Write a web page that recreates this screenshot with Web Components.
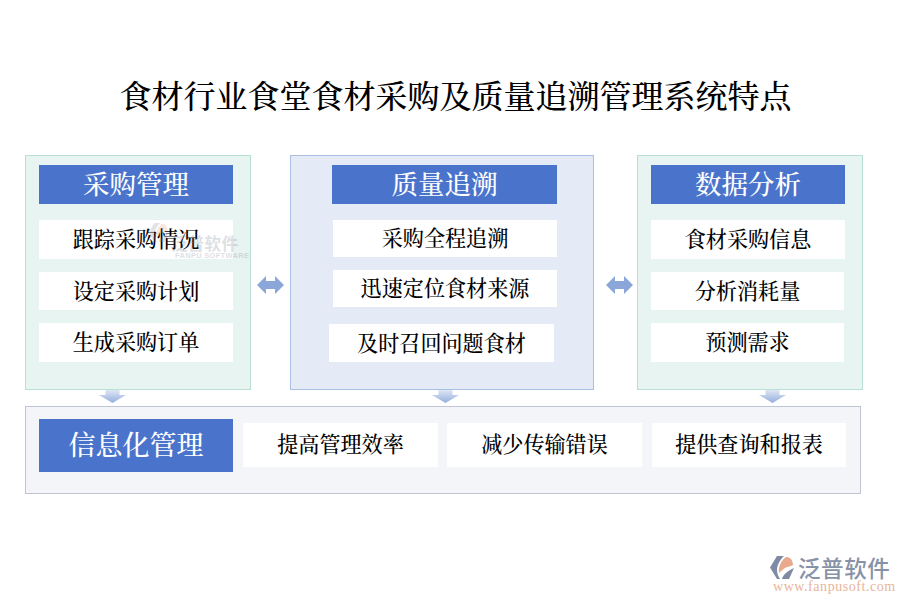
<!DOCTYPE html>
<html lang="zh"><head><meta charset="utf-8"><title>系统特点</title>
<style>
html,body{margin:0;padding:0;background:#fff}
body{width:900px;height:600px;overflow:hidden;font-family:"Noto Serif CJK SC","Liberation Serif","Noto Sans CJK SC",serif;color:#000}
</style></head><body>
<x-page>
  <x-title>食材行业食堂食材采购及质量追溯管理系统特点</x-title>
  <x-top>
    <x-panel heading="采购管理" tone="green" style="--w:226px;--pl:13px;--hw:194px;--arrow:73px">
      <x-row style="--w:194px;--h:39px;--mt:16px">跟踪采购情况</x-row>
      <x-row style="--w:194px;--h:38px;--mt:13px;--d:1px">设定采购计划</x-row>
      <x-row style="--w:194px;--h:39px;--mt:13px">生成采购订单</x-row>
    </x-panel>
    <x-link style="--w:39px;--shift:-1px"></x-link>
    <x-panel heading="质量追溯" tone="blue" style="--w:304px;--pl:41px;--hw:225px;--arrow:141px">
      <x-row style="--w:224px;--h:37px;--mt:16px;--ml:1px">采购全程追溯</x-row>
      <x-row style="--w:224px;--h:37px;--mt:13px;--ml:1px">迅速定位食材来源</x-row>
      <x-row style="--w:225px;--h:38px;--mt:17px;--ml:-3px;--d:1px">及时召回问题食材</x-row>
    </x-panel>
    <x-link style="--w:43px;--shift:8px"></x-link>
    <x-panel heading="数据分析" tone="green" style="--w:226px;--pl:13px;--hw:194px;--arrow:121px">
      <x-row style="--w:194px;--h:39px;--mt:16px">食材采购信息</x-row>
      <x-row style="--w:193px;--h:38px;--mt:13px;--d:1px">分析消耗量</x-row>
      <x-row style="--w:193px;--h:39px;--mt:13px">预测需求</x-row>
    </x-panel>
  </x-top>
  <x-bar heading="信息化管理">
    <x-row style="--w:195px;--h:44px;--mt:0px">提高管理效率</x-row>
    <x-row style="--w:195px;--h:44px;--mt:0px">减少传输错误</x-row>
    <x-row style="--w:194px;--h:44px;--mt:0px;--ml:1px">提供查询和报表</x-row>
  </x-bar>
  <x-watermark></x-watermark>
  <x-logo></x-logo>
</x-page>
<script>
const MARK=(a,b)=>`<path d="M7 0H14C9 5 7 10 7 14 7 17 8 20 10 23H7L0 11.5Z" fill="${a}"/><path d="M16 1C20 1 22 3 23 8 24 10 19 10 15 12 12 14 10 16 9 17 8 11 11 5 16 1Z" fill="${b}"/><path d="M12 23C13 19 17 15 24 12L19 23Z" fill="${a}"/>`;
function def(name,html){
  customElements.define(name,class extends HTMLElement{
    constructor(){super();this.attachShadow({mode:'open'}).innerHTML=html;}
    connectedCallback(){
      const s=this.shadowRoot.querySelector('[data-heading]');
      if(s)s.textContent=this.getAttribute('heading')||'';
      const t=this.getAttribute('tone');
      if(t)this.setAttribute('data-tone',t);
    }
  });
}
def('x-page',`<style>:host{display:block;position:relative;width:900px;height:600px;padding-top:73px;box-sizing:border-box}</style><slot></slot>`);
def('x-title',`<style>:host{display:block;width:911px;height:46px;line-height:42px;font-size:32px;font-weight:500;text-align:center;white-space:nowrap;color:#000}</style><slot></slot>`);
def('x-top',`<style>:host{display:flex;align-items:stretch;height:235px;margin:36px 0 16px 25px}</style><slot></slot>`);
def('x-panel',`<style>
:host{display:flex;flex-direction:column;position:relative;box-sizing:border-box;width:var(--w);height:235px;padding:9px 0 0 var(--pl);border:1px solid #b8e0d3;background:#e8f4f1}
:host([data-tone=blue]){background:#e4eaf6;border-color:#aabde3}
.h{width:var(--hw);height:39px;line-height:36px;background:#4a74cc;color:#fff;text-align:center;font-size:26.5px;font-weight:500;white-space:nowrap}
svg{position:absolute;top:100%;left:var(--arrow);margin-top:1px;display:block}
</style><div class="h" data-heading></div><slot></slot>
<svg width="27" height="13" viewBox="0 0 27 13"><defs><linearGradient id="g" x1="0" y1="0" x2="0" y2="1"><stop offset="0" stop-color="#dfe6f4"/><stop offset="1" stop-color="#94aede"/></linearGradient></defs><path d="M6.5 0H20.5V5H27L13.5 13 0 5H6.5Z" fill="url(#g)"/></svg>`);
def('x-row',`<style>:host{display:block;box-sizing:border-box;flex:none;width:var(--w);height:var(--h);line-height:calc(var(--h) - var(--d,3px));margin-top:var(--mt,0);margin-left:var(--ml,0);background:#fff;color:#000;text-align:center;font-size:21.1px;font-weight:500;white-space:nowrap}</style><slot></slot>`);
def('x-link',`<style>:host{display:flex;align-items:center;justify-content:center;flex:none;width:var(--w);height:235px;box-sizing:border-box;padding-left:var(--shift,0)}svg{display:block;margin-top:24px}</style>
<svg width="27" height="18" viewBox="0 0 27 18"><path d="M0 9 9 0V5H18V0L27 9 18 18V13H9V18Z" fill="#8ba6d9"/></svg>`);
def('x-bar',`<style>
:host{display:flex;box-sizing:border-box;width:836px;height:88px;margin-left:25px;padding:12px 0 0 13px;border:1px solid #c0c5d4;background:#f4f5f8}
.h{flex:none;width:194px;height:53px;line-height:50px;background:#4a74cc;color:#fff;text-align:center;font-size:27px;font-weight:500;white-space:nowrap}
.r{display:flex;gap:9px;margin:4px 0 0 10px;height:44px}
</style><div class="h" data-heading></div><div class="r"><slot></slot></div>`);
def('x-watermark',`<style>
:host{display:block;position:absolute;left:145px;top:222px;width:96px;height:40px;opacity:.22;pointer-events:none}
.t{position:absolute;left:26px;top:11px;font:bold 16.5px/20px "Noto Sans CJK SC",sans-serif;color:#6f7586;letter-spacing:.3px;white-space:nowrap}
.e{position:absolute;left:30px;top:29px;font:bold 7.5px/9px "Liberation Sans",sans-serif;color:#6f7586;letter-spacing:.3px;white-space:nowrap}
svg{position:absolute;left:2px;top:1px}
</style><svg width="24" height="19" viewBox="0 0 25 23">${MARK('#7a8296','#e09a7a')}</svg><span class="t">泛普软件</span><span class="e">FANPU SOFTWARE</span>`);
def('x-logo',`<style>
:host{display:block;position:absolute;left:770px;top:553px;width:125px;height:40px}
svg{position:absolute;left:0;top:3px}
.t{position:absolute;left:28px;top:2px;font:500 22.5px/25px "Noto Sans CJK SC",sans-serif;color:#8792a8;letter-spacing:.6px;white-space:nowrap}
.u{position:absolute;left:3px;top:27px;font:14px/13px "Liberation Serif",serif;color:#e8b59b;letter-spacing:.55px;white-space:nowrap}
</style><svg width="25" height="23" viewBox="0 0 25 23">${MARK('#7f8ba4','#e8a98c')}</svg><span class="t">泛普软件</span><span class="u">www.fanpusoft.com</span>`);
</script>
</body></html>
